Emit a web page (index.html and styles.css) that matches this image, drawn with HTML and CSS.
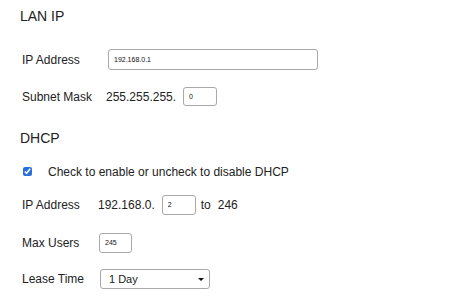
FILE: index.html
```html
<!DOCTYPE html>
<html lang="en">
  <head>
    <meta charset="UTF-8" />
    <meta name="viewport" content="width=device-width, initial-scale=1.0" />
    <title>Network Settings</title>
    <link rel="stylesheet" href="styles.css">
  </head>
  <body>
    <div class="section lan">
      <h2 class="sectionTitle">LAN IP</h2>

      <div class="row firstRow">
        <label class="label">IP Address</label>
        <input class="textInput wideInput" type="text" value="192.168.0.1">
      </div>

      <div class="row">
        <label class="label">Subnet Mask</label>
        <span class="prefix">255.255.255.</span>
        <input class="textInput smallInput" type="text" value="0">
      </div>
    </div>

    <div class="section dhcp">
      <h2 class="sectionTitle">DHCP</h2>

      <div class="row checkRow">
        <input class="checkbox" type="checkbox" checked>
        <span class="checkText">Check to enable or uncheck to disable DHCP</span>
      </div>

      <div class="row rangeRow">
        <label class="label">IP Address</label>
        <span class="prefix">192.168.0.</span>
        <input class="textInput smallInput" type="text" value="2">
        <span class="rangeTo">to</span>
        <span class="rangeEnd">246</span>
      </div>

      <div class="row usersRow">
        <label class="label">Max Users</label>
        <input class="textInput smallInput" type="text" value="245">
      </div>

      <div class="row leaseRow">
        <label class="label">Lease Time</label>
        <span class="selectWrap">
          <select class="select">
            <option>1 Day</option>
            <option>2 Days</option>
            <option>1 Week</option>
          </select>
        </span>
      </div>
    </div>
  </body>
</html>
```

FILE: styles.css
```css
* {
  box-sizing: border-box;
}

body {
  margin: 0;
  padding: 6px 0 0 20px;
  font-family: "Liberation Sans", Arial, Helvetica, sans-serif;
  font-size: 12px;
  color: #222;
  background: #fff;
}

.sectionTitle {
  margin: 0;
  height: 20px;
  line-height: 20px;
  font-size: 14px;
  font-weight: normal;
  color: #222;
}

.dhcp {
  margin-top: 21px;
}

.row {
  display: flex;
  align-items: center;
  height: 21px;
  margin-top: 16px;
  padding-left: 2px;
}

.firstRow {
  margin-top: 23px;
}

.label {
  width: 84px;
  flex-shrink: 0;
}

.dhcp .label {
  width: 76px;
}

.prefix {
  margin-right: 7px;
}

.textInput {
  height: 19px;
  padding: 0 5px;
  border: 1px solid #a9a9a9;
  border-radius: 3px;
  font-family: "Liberation Sans", Arial, sans-serif;
  font-size: 7px;
  color: #111;
  background: #fff;
}

.wideInput {
  width: 210px;
  height: 21px;
  margin-left: 2px;
}

.smallInput {
  width: 34px;
}

.checkRow {
  margin-top: 13px;
  padding-left: 3px;
}

.checkbox {
  width: 9px;
  height: 9px;
  margin: 0 16px 0 0;
  accent-color: #2a6fd9;
}

.rangeRow {
  margin-top: 12px;
}

.rangeRow .smallInput {
  height: 20px;
}

.rangeTo {
  margin: 0 7px 0 5px;
}

.usersRow {
  margin-top: 17px;
}

.usersRow .smallInput {
  width: 33px;
  height: 20px;
  margin-left: 1px;
}

.leaseRow {
  margin-top: 15px;
}

.selectWrap {
  position: relative;
  margin-left: 2px;
}

.select {
  appearance: none;
  width: 110px;
  height: 20px;
  padding: 0 8px;
  border: 1px solid #a9a9a9;
  border-radius: 3px;
  font-family: "Liberation Sans", Arial, sans-serif;
  font-size: 11px;
  color: #222;
  background: #fff;
}

.selectWrap::after {
  content: "";
  position: absolute;
  right: 6px;
  top: 9px;
  border-left: 3px solid transparent;
  border-right: 3px solid transparent;
  border-top: 3px solid #111;
}
```
